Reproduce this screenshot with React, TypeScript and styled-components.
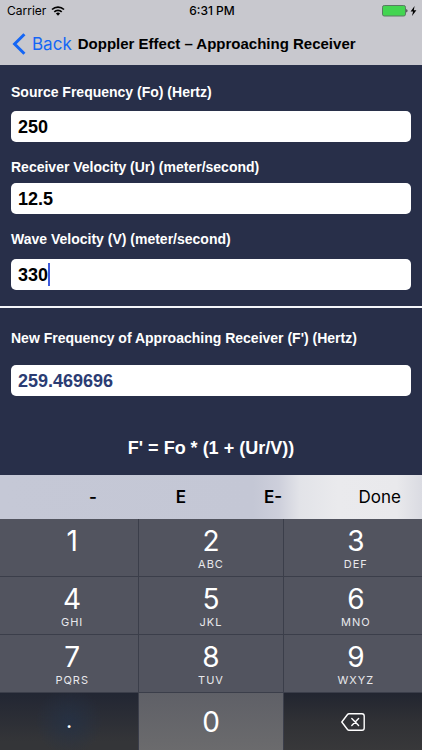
import React, { useState } from "react";
import styled, { createGlobalStyle } from "styled-components";

const GlobalStyle = createGlobalStyle`
  * { box-sizing: border-box; }
  body { margin: 0; background: #282f49; }
  button, input, output { font: inherit; color: inherit; margin: 0; }
  button { background: none; border: 0; padding: 0; cursor: pointer; }
`;

const helvetica = `"Liberation Sans", Arial, sans-serif`;
const system = `Inter, "Liberation Sans", sans-serif`;

const Screen = styled.div`
  display: flex;
  flex-direction: column;
  min-height: 100vh;
  background: #282f49;
  color: #fff;
  font-family: ${helvetica};
`;

const Header = styled.header`
  background: #c8c8ce;
  color: #000;
`;

const StatusBar = styled.div`
  display: grid;
  grid-template-columns: 1fr auto 1fr;
  align-items: center;
  height: 22px;
  padding: 0 5px 0 7px;
  font: 400 12px/22px ${system};
`;

const StatusGroup = styled.div<{ $end?: boolean }>`
  display: flex;
  align-items: center;
  gap: ${(p) => (p.$end ? 2 : 5)}px;
  justify-content: ${(p) => (p.$end ? "flex-end" : "flex-start")};
`;

const Clock = styled.time`
  font-weight: 500;
`;

const NavBar = styled.nav`
  display: flex;
  align-items: center;
  gap: 6px;
  height: 43px;
  padding: 0 12px;
`;

const BackLink = styled.a`
  display: flex;
  align-items: center;
  gap: 6px;
  color: #1466f5;
  text-decoration: none;
  font: 400 17px/20px ${system};
`;

const Title = styled.h1`
  margin: 0;
  font-size: 15px;
  line-height: 20px;
  font-weight: 700;
  white-space: nowrap;
`;

const Inputs = styled.section`
  display: flex;
  flex-direction: column;
  gap: 15px;
  padding: 17px 11px 16px;
  border-bottom: 2px solid #f4f5f9;
`;

const Results = styled.section`
  display: flex;
  flex-direction: column;
  flex: 1;
  padding: 20px 11px 0;
`;

const FieldGroup = styled.div<{ $gap: number }>`
  display: flex;
  flex-direction: column;
  gap: ${(p) => p.$gap}px;
`;

const Label = styled.label`
  font-size: 14px;
  line-height: 20px;
  font-weight: 700;
  white-space: nowrap;
`;

const Field = styled.div`
  position: relative;
  font-size: 18px;
  line-height: 30px;
  font-weight: 700;
`;

const TextBox = styled.input<{ $result?: boolean }>`
  display: block;
  width: 100%;
  height: 31px;
  padding: 2px 7px 0;
  border: 0;
  border-radius: 5px;
  outline: 0;
  background: #fff;
  color: ${(p) => (p.$result ? "#2b3c73" : "#000")};
  caret-color: transparent;
`;

const Caret = styled.span<{ $chars: number }>`
  position: absolute;
  top: 4px;
  left: calc(7px + ${(p) => p.$chars}ch);
  width: 2px;
  height: 23px;
  background: #3f5bdc;
  pointer-events: none;
`;

const Formula = styled.p`
  margin: 42px 0 16px;
  font-size: 18px;
  line-height: 20px;
  font-weight: 700;
  text-align: center;
`;

const Accessory = styled.div`
  display: grid;
  grid-template-columns: 48fr 90fr 86fr 98fr 100fr;
  align-items: center;
  height: 44px;
  color: #000;
  font: 600 17px/44px ${system};
  background: linear-gradient(
    90deg,
    #c5c8d6 0%,
    #c4c7d5 60%,
    #cdcfdb 66%,
    #e2e3e8 71%,
    #eaeaed 80%,
    #e9e9ec 94%,
    #dadbe2 100%
  );
`;

const AccessoryKey = styled.button<{ $done?: boolean }>`
  height: 44px;
  font-weight: ${(p) => (p.$done ? 400 : 600)};
  text-align: ${(p) => (p.$done ? "right" : "center")};
  padding-right: ${(p) => (p.$done ? 21 : 0)}px;
`;

const Keypad = styled.div`
  display: grid;
  grid-template-columns: 139fr 144fr 139fr;
  grid-template-rows: repeat(4, 57px);
  gap: 1px;
  background: #3b3e4a;
  font-family: ${system};
`;

const keyTones = {
  digit: "#52545f",
  zero: "linear-gradient(#5f6067, #6b6b6d)",
  point: "radial-gradient(circle at 50% 50%, rgba(36, 50, 72, 0.7), rgba(36, 50, 72, 0) 45%), linear-gradient(#222633, #343538 85%)",
  erase: "linear-gradient(#222530, #303135 50%, #38383a)",
};

const Key = styled.button<{ $tone: keyof typeof keyTones; $outer?: boolean }>`
  display: flex;
  flex-direction: column;
  align-items: center;
  justify-content: center;
  padding-left: ${(p) => (p.$outer ? 6 : 0)}px;
  background: ${(p) => keyTones[p.$tone]};
  color: #fff;
`;

const Digit = styled.span`
  font-size: 28px;
  line-height: 34px;
  font-weight: 400;
`;

const Point = styled.span`
  font-size: 18px;
  line-height: 22px;
  font-weight: 600;
`;

const Letters = styled.span`
  height: 13px;
  color: #e8e8ec;
  font-size: 11px;
  line-height: 13px;
  letter-spacing: 1px;
`;

const WifiIcon = () => (
  <svg width="14" height="10" viewBox="0 0 14 10" fill="none" stroke="#000" strokeWidth="1.7" aria-label="Wi-Fi">
    <path d="M1 3.5a8.6 8.6 0 0 1 12 0" />
    <path d="M3.3 5.9a5.3 5.3 0 0 1 7.4 0" />
    <path d="M7 9.8 4.9 7.6a3 3 0 0 1 4.2 0z" fill="#000" stroke="none" />
  </svg>
);

const BatteryIcon = () => (
  <svg width="26" height="12" viewBox="0 0 26 12" aria-label="Battery full">
    <rect x="0.5" y="0.5" width="23" height="10.5" rx="1.8" fill="#43d551" stroke="#5a7a62" />
    <path d="M24.4 4c1.4.4 1.4 3.1 0 3.5z" fill="#222" />
  </svg>
);

const BoltIcon = () => (
  <svg width="7" height="10" viewBox="0 0 7 10" fill="#000" aria-label="Charging">
    <path d="M4.6 0 .6 5.6h2.5L2 10l4.4-5.8H3.8z" />
  </svg>
);

const ChevronIcon = () => (
  <svg width="14" height="22" viewBox="0 0 14 22" fill="none" stroke="#1466f5" strokeWidth="3" aria-hidden="true">
    <path d="M12.4 1.2 2.6 11l9.8 9.8" />
  </svg>
);

const EraseIcon = () => (
  <svg width="24" height="18" viewBox="0 0 24 18" fill="none" stroke="#fff" strokeWidth="1.4" strokeLinejoin="round" aria-hidden="true">
    <path d="M8 .8h13a2.2 2.2 0 0 1 2.2 2.2v12a2.2 2.2 0 0 1-2.2 2.2H8a2 2 0 0 1-1.5-.7L.8 9l5.7-7.5A2 2 0 0 1 8 .8z" />
    <path d="m10.8 5.6 6.8 6.8m0-6.8-6.8 6.8" strokeLinecap="round" />
  </svg>
);

type FieldId = "source" | "receiver" | "wave";

const fields: { id: FieldId; label: string; gap: number }[] = [
  { id: "source", label: "Source Frequency (Fo) (Hertz)", gap: 9 },
  { id: "receiver", label: "Receiver Velocity (Ur) (meter/second)", gap: 6 },
  { id: "wave", label: "Wave Velocity (V) (meter/second)", gap: 10 },
];

const digitKeys = [
  ["1", ""], ["2", "ABC"], ["3", "DEF"],
  ["4", "GHI"], ["5", "JKL"], ["6", "MNO"],
  ["7", "PQRS"], ["8", "TUV"], ["9", "WXYZ"],
];

export default function App() {
  const [values, setValues] = useState<Record<FieldId, string>>({
    source: "250",
    receiver: "12.5",
    wave: "330",
  });
  const [active, setActive] = useState<FieldId | null>("wave");

  const update = (id: FieldId, value: string) => setValues((v) => ({ ...v, [id]: value }));
  const type = (text: string) => active && update(active, values[active] + text);
  const erase = () => active && update(active, values[active].slice(0, -1));

  const frequency = Number(values.source) * (1 + Number(values.receiver) / Number(values.wave));
  const result = Number.isFinite(frequency) ? String(Math.floor(frequency * 1e6) / 1e6) : "";

  return (
    <Screen>
      <GlobalStyle />
      <Header>
        <StatusBar>
          <StatusGroup>
            Carrier <WifiIcon />
          </StatusGroup>
          <Clock>6:31 PM</Clock>
          <StatusGroup $end>
            <BatteryIcon />
            <BoltIcon />
          </StatusGroup>
        </StatusBar>
        <NavBar>
          <BackLink href="#back">
            <ChevronIcon />
            Back
          </BackLink>
          <Title>Doppler Effect – Approaching Receiver</Title>
        </NavBar>
      </Header>

      <Inputs>
        {fields.map(({ id, label, gap }) => (
          <FieldGroup key={id} $gap={gap}>
            <Label htmlFor={id}>{label}</Label>
            <Field>
              <TextBox
                id={id}
                value={values[id]}
                inputMode="decimal"
                onFocus={() => setActive(id)}
                onChange={(e) => update(id, e.target.value)}
              />
              {active === id && <Caret $chars={values[id].length} />}
            </Field>
          </FieldGroup>
        ))}
      </Inputs>

      <Results>
        <FieldGroup $gap={17}>
          <Label htmlFor="result">New Frequency of Approaching Receiver (F') (Hertz)</Label>
          <Field>
            <TextBox id="result" value={result} readOnly $result />
          </Field>
        </FieldGroup>
        <Formula>F' = Fo * (1 + (Ur/V))</Formula>
      </Results>

      <Accessory>
        <span />
        <AccessoryKey onClick={() => type("-")}>-</AccessoryKey>
        <AccessoryKey onClick={() => type("E")}>E</AccessoryKey>
        <AccessoryKey onClick={() => type("E-")}>E-</AccessoryKey>
        <AccessoryKey $done onClick={() => setActive(null)}>Done</AccessoryKey>
      </Accessory>
      <Keypad>
        {digitKeys.map(([digit, letters], index) => (
          <Key key={digit} $tone="digit" $outer={index % 3 !== 1} onClick={() => type(digit)}>
            <Digit>{digit}</Digit>
            <Letters>{letters}</Letters>
          </Key>
        ))}
        <Key $tone="point" onClick={() => type(".")}>
          <Point>.</Point>
        </Key>
        <Key $tone="zero" onClick={() => type("0")}>
          <Digit>0</Digit>
        </Key>
        <Key $tone="erase" aria-label="Delete" onClick={erase}>
          <EraseIcon />
        </Key>
      </Keypad>
    </Screen>
  );
}
